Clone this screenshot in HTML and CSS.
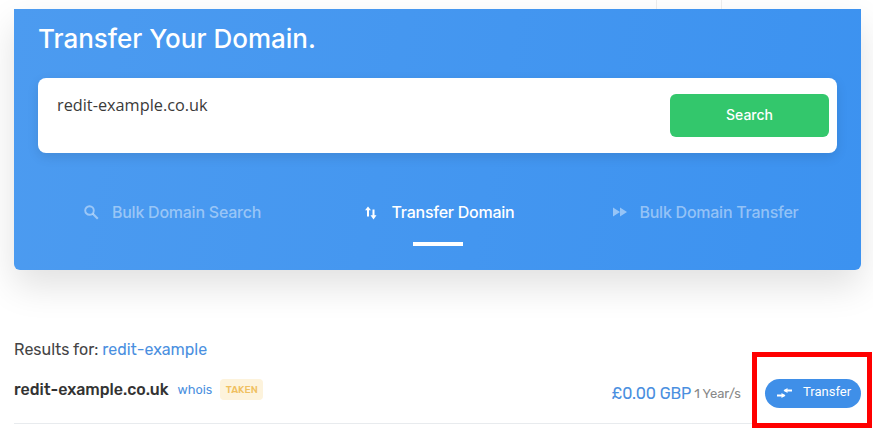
FILE: index.html
```html
<!DOCTYPE html>
<html lang="en">
<head>
    <meta charset="UTF-8">
    <meta name="viewport" content="width=device-width, initial-scale=1.0">
    <title>Transfer Your Domain</title>
    <link rel="stylesheet" href="styles.css">
</head>
<body>
    <div class="top-strip">
        <div class="top-cell"></div>
    </div>

    <div class="hero">
        <h1>Transfer Your Domain.</h1>

        <div class="search-box">
            <div class="search-text">redit-example.co.uk</div>
            <button class="search-btn">Search</button>
        </div>

        <div class="tabs">
            <div class="tab">
                <svg class="tab-icon" width="16" height="16" viewBox="0 0 16 16"><circle cx="6.500" cy="6.500" r="4.300" fill="none" stroke="currentColor" stroke-width="1.900"/><path d="M9.800 9.800l5 5" stroke="currentColor" stroke-width="2.200" fill="none"/></svg>
                <span class="tab-label">Bulk Domain Search</span>
            </div>
            <div class="tab active">
                <svg class="tab-icon" width="16" height="16" viewBox="0 0 16 16"><path d="M6 5v7.500M11.500 5.500V12" stroke="currentColor" stroke-width="2" fill="none"/><path d="M3 6.200L6 2.500l3 3.700zM8.500 11.300h6l-3 4.200z" fill="currentColor"/></svg>
                <span>Transfer Domain</span>
            </div>
            <div class="tab">
                <svg class="tab-icon icon-forward" width="16" height="16" viewBox="0 0 16 16"><path d="M1 3.500L8 8l-7 4.500zM8 3.500L15 8l-7 4.500z" fill="currentColor"/></svg>
                <span>Bulk Domain Transfer</span>
            </div>
        </div>
    </div>

    <div class="results">
        <p class="results-for">Results for: <a href="#">redit-example</a></p>

        <div class="result-row">
            <span class="domain">redit-example.co.uk</span>
            <a class="whois" href="#">whois</a>
            <span class="badge">TAKEN</span>
            <div class="result-buy">
                <span class="price">&pound;0.00 GBP</span>
                <span class="period">1 Year/s</span>
                <button class="transfer-btn">
                    <svg class="transfer-icon" width="15" height="10" viewBox="0 0 15 10"><path d="M7.500 2.500h7.500M0 7.500h7.500" stroke="currentColor" stroke-width="2" fill="none"/><path d="M10.500 0L6.500 2.500l4 2.500zM4.500 5L8.500 7.500 4.500 10z" fill="currentColor"/></svg>
                    <span class="transfer-label">Transfer</span>
                </button>
            </div>
        </div>
    </div>

    <div class="highlight"></div>
</body>
</html>
```

FILE: styles.css
```css
* {
    margin: 0;
    padding: 0;
    box-sizing: border-box;
}

html, body {
    height: 436px;
    overflow: hidden;
}

body {
    position: relative;
    background-color: #fff;
    font-family: Rubik, Roboto, Arial, sans-serif;
    color: #333;
}

.top-strip {
    height: 9px;
    padding-left: 656px;
}

.top-cell {
    width: 66px;
    height: 9px;
    border-left: 1px solid #eee;
    border-right: 1px solid #eee;
}

.hero {
    height: 261px;
    margin: 0 12px 0 14px;
    padding: 15px 24px 0;
    background: linear-gradient(100deg, #4c9bf0, #3c92f0);
    border-radius: 0 0 6px 6px;
    box-shadow: 0 16px 36px rgba(0, 0, 0, 0.12);
    font-family: Inter, Arial, sans-serif;
    color: #fff;
}

.hero h1 {
    font-size: 26px;
    line-height: 30px;
    font-weight: 500;
    margin-bottom: 24px;
}

.search-box {
    display: flex;
    justify-content: space-between;
    height: 75px;
    padding: 16px 8px 16px 19px;
    background: #fff;
    border-radius: 8px;
    box-shadow: 0 4px 12px rgba(0, 0, 0, 0.1);
}

.search-text {
    font-family: "Open Sans", Arial, sans-serif;
    font-size: 16.300px;
    line-height: 22px;
    color: #3a3a3a;
}

.search-btn {
    width: 159px;
    height: 43px;
    padding-bottom: 2px;
    background-color: #33c76c;
    color: #fff;
    border: none;
    border-radius: 6px;
    font-family: Inter, Arial, sans-serif;
    font-size: 14px;
    font-weight: 500;
}

.tabs {
    display: grid;
    grid-template-columns: repeat(3, 1fr);
    margin-top: 42px;
    padding-left: 1px;
}

.tab {
    position: relative;
    display: flex;
    justify-content: center;
    align-items: center;
    gap: 14px;
    height: 34px;
    font-size: 16px;
    font-weight: 500;
    letter-spacing: -0.25px;
    color: rgba(255, 255, 255, 0.45);
}

.tab-icon {
    flex: none;
}

.tab-label {
    margin-left: -1px;
}

.icon-forward {
    margin-left: 3px;
    margin-right: -3px;
}

.tab.active {
    color: #fff;
}

.tab.active::after {
    content: "";
    position: absolute;
    left: 50%;
    bottom: -17px;
    width: 50px;
    height: 4px;
    margin-left: -25px;
    background: #fff;
}

.results {
    margin: 0 12px 0 14px;
    padding-top: 69px;
}

.results-for {
    font-size: 16px;
    line-height: 22px;
    color: #444;
}

.results-for a,
.whois,
.price {
    color: #4a8fe0;
    text-decoration: none;
}

.result-row {
    display: flex;
    align-items: center;
    height: 63px;
    padding-bottom: 5px;
    border-bottom: 1px solid #e8ebee;
}

.domain {
    font-size: 16px;
    font-weight: 500;
    color: #333;
}

.whois {
    margin-left: 9px;
    font-size: 12.700px;
}

.badge {
    margin-left: 8px;
    padding: 3.500px 5.500px;
    background: #fdf3dc;
    border-radius: 4px;
    font-size: 10px;
    line-height: 14px;
    font-weight: 500;
    color: #f0c060;
}

.result-buy {
    display: flex;
    align-items: center;
    margin-left: auto;
    margin-top: 7px;
}

.price {
    font-size: 16px;
    letter-spacing: -0.1px;
}

.period {
    margin-left: 3px;
    font-size: 13px;
    color: #888;
}

.transfer-btn {
    display: flex;
    align-items: center;
    gap: 11px;
    width: 96px;
    height: 29px;
    margin-left: 24px;
    padding: 0 11px 0 12px;
    background-color: #3f8fe8;
    color: #fff;
    border: none;
    border-radius: 15px;
    font-family: Roboto, Arial, sans-serif;
    font-size: 13px;
}

.transfer-icon {
    flex: none;
}

.transfer-label {
    margin-bottom: 3px;
}

.highlight {
    position: absolute;
    left: 752px;
    top: 352px;
    width: 120px;
    height: 76px;
    border: 5px solid #f00;
}
```
